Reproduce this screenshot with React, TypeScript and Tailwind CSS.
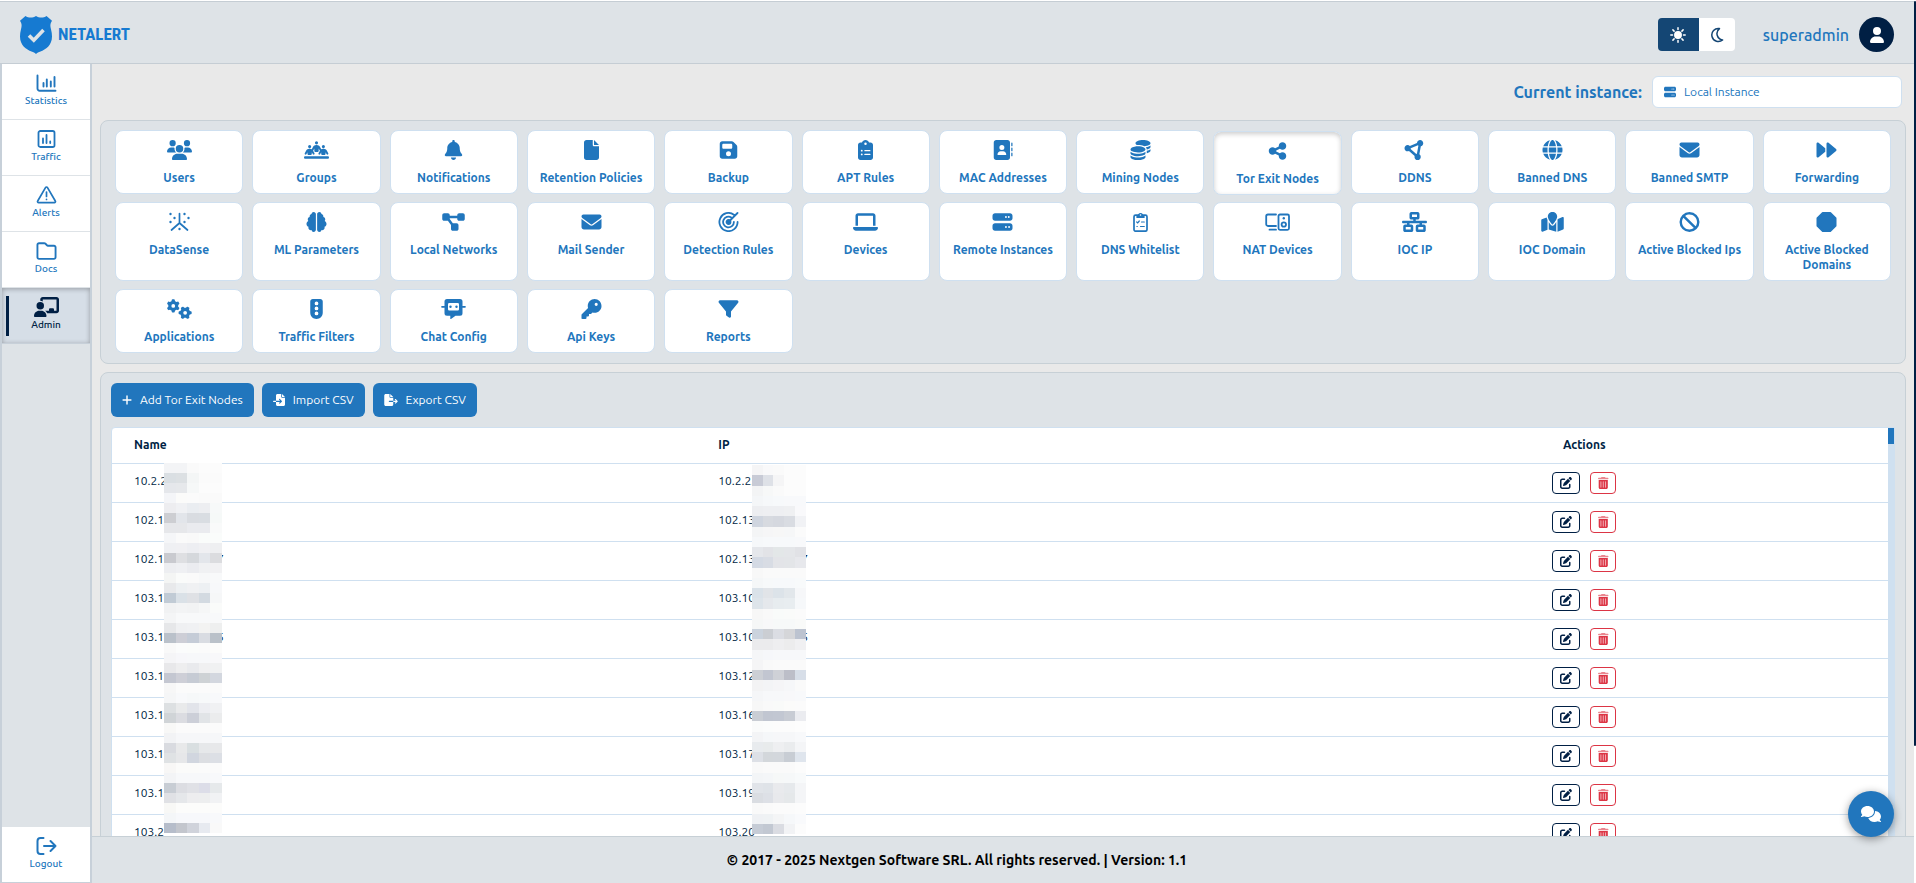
import { useState } from "react";
import type { ComponentType, ReactNode } from "react";
import {
  FaAddressBook,
  FaBan,
  FaBell,
  FaBrain,
  FaChalkboardUser,
  FaCircleNodes,
  FaClipboardList,
  FaCoins,
  FaComments,
  FaDiagramProject,
  FaEnvelope,
  FaFile,
  FaFileExport,
  FaFileImport,
  FaFilter,
  FaFloppyDisk,
  FaForward,
  FaGears,
  FaGlobe,
  FaKey,
  FaLaptop,
  FaMapLocation,
  FaNetworkWired,
  FaPenToSquare,
  FaPeopleLine,
  FaPlus,
  FaRegFolder,
  FaServer,
  FaShareNodes,
  FaTrafficLight,
  FaUser,
  FaUsers,
} from "react-icons/fa6";

type IconProps = { className?: string };
type Icon = ComponentType<IconProps>;

function StatsIcon({ className }: IconProps) {
  return (
    <svg viewBox="0 0 20 20" className={className} fill="none" stroke="currentColor" strokeWidth="1.9" strokeLinecap="round">
      <path d="M1 2.500v13A2.200 2.200 0 0 0 3.200 17.700H19M7 10v3.500M10.300 6.500v7M14.300 8.500v5M18 4v9.500" />
    </svg>
  );
}

function TrafficIcon({ className }: IconProps) {
  return (
    <svg viewBox="0 0 20 20" className={className} fill="none" stroke="currentColor" strokeWidth="1.8" strokeLinecap="round">
      <rect x="2" y="2" width="16" height="16" rx="1.8" />
      <path d="M6.500 9.500v4.500M10 6v8M13.700 12.500v1.500" />
    </svg>
  );
}

function AlertsIcon({ className }: IconProps) {
  return (
    <svg viewBox="0 0 20 20" className={className} fill="none" stroke="currentColor" strokeWidth="1.7" strokeLinecap="round" strokeLinejoin="round">
      <path d="M9 2.600 1.200 16a1.100 1.100 0 0 0 1 1.700h15.600a1.100 1.100 0 0 0 1-1.700L11 2.600a1.150 1.150 0 0 0-2 0Z" />
      <path d="M10 7v4.500M10 14.400v.1" />
    </svg>
  );
}

function LogoutIcon({ className }: IconProps) {
  return (
    <svg viewBox="0 0 20 20" className={className} fill="none" stroke="currentColor" strokeWidth="2" strokeLinecap="round" strokeLinejoin="round">
      <path d="M7 2H4a3 3 0 0 0-3 3v10a3 3 0 0 0 3 3h3M7.500 10H19M14 5l5 5-5 5" />
    </svg>
  );
}

function SunIcon({ className }: IconProps) {
  return (
    <svg viewBox="0 0 16 16" className={className} fill="currentColor" stroke="currentColor" strokeWidth="1.5" strokeLinecap="round">
      <circle cx="8" cy="8" r="3.2" />
      <path d="M8 .8v1.700M8 13.500v1.700M.8 8h1.700M13.500 8h1.700M2.900 2.900l1.200 1.200M11.900 11.900l1.200 1.200M2.900 13.100l1.200-1.200M11.900 4.100l1.200-1.200" />
    </svg>
  );
}

function MoonIcon({ className }: IconProps) {
  return (
    <svg viewBox="0 0 16 16" className={className} fill="none" stroke="currentColor" strokeWidth="1.5" strokeLinejoin="round">
      <path d="M10.500 1.600A6.500 6.500 0 1 0 13.600 12.900 6.300 6.300 0 0 1 10.500 1.600Z" />
    </svg>
  );
}

function DataSenseIcon({ className }: IconProps) {
  return (
    <svg viewBox="0 0 21 20" className={className} fill="currentColor">
      <path d="M10.500 1.500V11L2.500 18M10.500 11l8 7" fill="none" stroke="currentColor" strokeWidth="1.7" strokeLinecap="round" />
      <circle cx="1.5" cy="2" r="1.2" />
      <circle cx="5.5" cy="6" r="1.2" />
      <circle cx="1.5" cy="10" r="1.2" />
      <circle cx="15.5" cy="2" r="1.2" />
      <circle cx="19.5" cy="6" r="1.2" />
      <circle cx="15.5" cy="10" r="1.2" />
      <circle cx="10.5" cy="17" r="1.2" />
    </svg>
  );
}

function RadarIcon({ className }: IconProps) {
  return (
    <svg viewBox="0 0 20 20" className={className} fill="none" stroke="currentColor" strokeWidth="1.8" strokeLinecap="round">
      <path d="M15.400 2.700A9.100 9.100 0 1 0 19.100 10M12.800 5.400A5.400 5.400 0 1 0 15.400 10M19 1l-9 9" />
      <circle cx="10" cy="10" r="2" fill="currentColor" />
    </svg>
  );
}

function ClipboardCheckIcon({ className }: IconProps) {
  return (
    <svg viewBox="0 0 15 20" className={className} fill="none" stroke="currentColor" strokeWidth="1.7" strokeLinecap="round">
      <rect x="1" y="3.2" width="13" height="16" rx="1.6" />
      <path d="M4 5.500V3.500h1.500a2 2 0 0 1 4 0H11v2Z" fill="currentColor" strokeWidth="1.2" />
      <path d="M3.700 10l1 .9 1.600-1.900M8.500 10h2.800M3.900 14.500h.4M7.500 14.500h3.800" strokeWidth="1.2" />
      <circle cx="7.5" cy="3" r=".8" fill="#fff" stroke="none" />
    </svg>
  );
}

function NatDevicesIcon({ className }: IconProps) {
  return (
    <svg viewBox="0 0 25 20" className={className} fill="none" stroke="currentColor" strokeWidth="1.8" strokeLinecap="round">
      <path d="M11 2.500H3A1.800 1.800 0 0 0 1.200 4.300v7.900A1.800 1.800 0 0 0 3 14h8M4.500 17.700H11" />
      <rect x="13.5" y="2.5" width="10.5" height="15.3" rx="1.5" />
      <circle cx="18.8" cy="12.5" r="2.2" />
      <circle cx="18.8" cy="6.2" r="1.2" fill="currentColor" stroke="none" />
    </svg>
  );
}

function OctagonIcon({ className }: IconProps) {
  return (
    <svg viewBox="0 0 20 20" className={className} fill="currentColor" stroke="currentColor" strokeWidth="2" strokeLinejoin="round">
      <path d="M6.300 1h7.400L19 6.300v7.400L13.700 19H6.300L1 13.700V6.300Z" />
    </svg>
  );
}

function ChatBotIcon({ className }: IconProps) {
  return (
    <svg viewBox="0 0 25 20" className={className} fill="currentColor">
      <path
        fillRule="evenodd"
        d="M6 0h13a2.500 2.500 0 0 1 2.500 2.500v11.800a2.500 2.500 0 0 1-2.500 2.500h-4.500L10 20q-.7.400-.7-.4v-2.800H6a2.500 2.500 0 0 1-2.500-2.500V2.500A2.500 2.500 0 0 1 6 0Zm2.300 4A1.300 1.300 0 0 0 7 5.300v5a1.300 1.300 0 0 0 1.300 1.300h8.400a1.300 1.300 0 0 0 1.300-1.300v-5A1.300 1.300 0 0 0 16.700 4Z"
      />
      <circle cx="9.5" cy="7.8" r="1.2" />
      <circle cx="15.5" cy="7.8" r="1.2" />
      <path d="M1 7.800h2.500M21.500 7.800H24" stroke="currentColor" strokeWidth="1.7" strokeLinecap="round" />
    </svg>
  );
}

function TrashIcon({ className }: IconProps) {
  return (
    <svg viewBox="0 0 448 512" className={className} fill="currentColor">
      <path
        opacity=".6"
        d="M135 18c6-11 17-18 29-18h120c12 0 23 7 29 18l7 14h96c18 0 32 14 32 32s-14 32-32 32H32C14 96 0 82 0 64s14-32 32-32h96z"
      />
      <path d="M32 128h384v320c0 35-29 64-64 64H96c-35 0-64-29-64-64z" opacity=".35" />
      <path
        d="M32 128h384v320c0 35-29 64-64 64H96c-35 0-64-29-64-64zm92 56c-13 0-20 9-20 20v232a20 20 0 0 0 40 0V204c0-11-7-20-20-20zm100 0c-13 0-20 9-20 20v232a20 20 0 0 0 40 0V204c0-11-7-20-20-20zm100 0c-13 0-20 9-20 20v232a20 20 0 0 0 40 0V204c0-11-7-20-20-20z"
        fillRule="evenodd"
      />
    </svg>
  );
}

function Logo() {
  return (
    <a href="#" className="flex items-center gap-1.5 text-[#167ad1]">
      <svg viewBox="0 0 32 38" className="h-[38px] w-8">
        <path
          fill="currentColor"
          d="M5.500 0C8.500 2 12.500 2.200 16 0c3.500 2.200 7.500 2 10.500 0L32 4.800c-2.200 3-1.800 5.500-1 8.400.7 2.600 1 5 1 7.300 0 9-6.500 13-11.500 15-1.800.7-3.500 1.400-4.500 2.500-1-1.100-2.700-1.800-4.500-2.500C6.500 33.500 0 29.500 0 20.500c0-2.300.3-4.700 1-7.300.8-2.900 1.200-5.400-1-8.400Z"
        />
        <path d="M9 19.500l4.800 4.700L23.500 14" fill="none" stroke="#dee3e7" strokeWidth="3.6" />
      </svg>
      <span className="font-['Roboto_Condensed','Open_Sans_Condensed','Liberation_Sans',sans-serif] text-[17px] font-bold">NETALERT</span>
    </a>
  );
}

const navItems: { label: string; icon: Icon }[] = [
  { label: "Statistics", icon: StatsIcon },
  { label: "Traffic", icon: TrafficIcon },
  { label: "Alerts", icon: AlertsIcon },
  { label: "Docs", icon: FaRegFolder },
  { label: "Admin", icon: FaChalkboardUser },
];

const sections: { label: string; icon: Icon }[] = [
  { label: "Users", icon: FaUsers },
  { label: "Groups", icon: FaPeopleLine },
  { label: "Notifications", icon: FaBell },
  { label: "Retention Policies", icon: FaFile },
  { label: "Backup", icon: FaFloppyDisk },
  { label: "APT Rules", icon: FaClipboardList },
  { label: "MAC Addresses", icon: FaAddressBook },
  { label: "Mining Nodes", icon: FaCoins },
  { label: "Tor Exit Nodes", icon: FaShareNodes },
  { label: "DDNS", icon: FaCircleNodes },
  { label: "Banned DNS", icon: FaGlobe },
  { label: "Banned SMTP", icon: FaEnvelope },
  { label: "Forwarding", icon: FaForward },
  { label: "DataSense", icon: DataSenseIcon },
  { label: "ML Parameters", icon: FaBrain },
  { label: "Local Networks", icon: FaDiagramProject },
  { label: "Mail Sender", icon: FaEnvelope },
  { label: "Detection Rules", icon: RadarIcon },
  { label: "Devices", icon: FaLaptop },
  { label: "Remote Instances", icon: FaServer },
  { label: "DNS Whitelist", icon: ClipboardCheckIcon },
  { label: "NAT Devices", icon: NatDevicesIcon },
  { label: "IOC IP", icon: FaNetworkWired },
  { label: "IOC Domain", icon: FaMapLocation },
  { label: "Active Blocked Ips", icon: FaBan },
  { label: "Active Blocked Domains", icon: OctagonIcon },
  { label: "Applications", icon: FaGears },
  { label: "Traffic Filters", icon: FaTrafficLight },
  { label: "Chat Config", icon: ChatBotIcon },
  { label: "Api Keys", icon: FaKey },
  { label: "Reports", icon: FaFilter },
];

const nodes = [
  { name: "10.2.2", ip: "10.2.23" },
  { name: "102.1", ip: "102.13" },
  { name: "102.1", ip: "102.13", tail: "7" },
  { name: "103.1", ip: "103.10" },
  { name: "103.1", ip: "103.10", tail: "5" },
  { name: "103.1", ip: "103.12" },
  { name: "103.1", ip: "103.16" },
  { name: "103.1", ip: "103.17" },
  { name: "103.1", ip: "103.19" },
  { name: "103.2", ip: "103.20" },
];

// redaction masks, five colour cells per line
const nameMask = [
  "f3f4f6 f3f4f6 fafafa fcfcfc fcfcfc",
  "dadfe3 dce0e3 f4f6f6 fbfbfb fbfbfb",
  "e5e7eb e6e8eb f6f8f8 fcfcfc fcfcfc",
  "f4f5f8 fbfbfa fbfbfb fafafa fafafa",
  "ededf0 f0f1f4 eaedf1 edeef1 f7f9f9",
  "cdced2 e2e5ea d9dce1 d9dde2 f6f9f8",
  "e6e7ea e6e7ea eaebef eaebef f9fafa",
  "f5f6f8 fafafa f9f9f9 fafcfb fafcfb",
  "eff0f3 f0f0f3 edeef2 f0f0f3 eeeff1",
  "c9cacf dedfe2 d5d8dc e3e6eb dbdcdf",
  "edeef1 eff0f3 ebecf0 f0f1f3 f1f1f3",
  "f4f5f4 fafbfa fafafa f7f8f9 f8f9fa",
  "e8e9eb edf0f2 f0f1f3 edf0f3 f7f8fa",
  "c1cbd5 dae1e7 dfe1e5 d3dae1 f6f7f8",
  "f1f2f3 f3f4f5 f2f3f4 f6f7f7 fafbfa",
  "f4f5f6 f8f9fa f8f9fa f8f9fa f8f9fa",
  "e6e7e9 eff0f2 f0f1f3 f3f3f2 eeefef",
  "bac1ca cdced6 c5ccd7 d9dce2 bac1c9",
  "f9f9f9 fbfcfc fbfcfb fbfbfb fcfcfb",
  "f5f5f7 f7f7fa f7f8fa f7f8fa f8f8fa",
  "e8e8ea eeeeef e9eaed f0f0f1 f0f1f2",
  "c4c7d1 cecfd7 c6cbd4 ced2d5 d3d7df",
  "f7f7f7 fbfbfb fbfbfb fbfbfb fbfbfb",
  "f5f6f7 f8f9fb f6f8f9 f7f9fa f8f9fb",
  "dde0e2 e9eaeb e2e4ea edeef2 f0f1f3",
  "d0d4d7 dbdce1 cccfd8 e1e4e7 ebeced",
  "f8f8f7 fbfbfb fbfbfb fbfbfb fbfbfb",
  "f2f3f5 f6f7f9 f6f7f9 f6f7f9 f6f7f9",
  "d9dbe0 e8e9ea d9dfe1 e6e8ea e7e8ea",
  "dfe2e4 e6e7e9 d1d6df dcdee2 dcdfe5",
  "f8f7f6 fbfbfa fbfbfa fbfbfb fbfbfb",
  "f3f4f6 f7f8fa f7f8fa f7f8fa f8f9fb",
  "c8cdd4 dcdde2 e0e1e6 dcdde8 e6e9eb",
  "e0e1e5 e5e7ea ededef edeeef f1f2f4",
  "f8f8f6 fcfcfb fcfcfb fcfcfb fcfcfb",
  "f4f6f8 f7f8fb f7f8fb f7f8fb f8f9fb",
  "b6bdca c3c6cd d0d3db e7eaf0 f9f9f9",
];

const ipMask = [
  "f5f5f6 f9f9fa fafafa fcfcfc fcfcfc",
  "c8cbd6 dee1e7 f5f5f6 fcfcfc fcfcfc",
  "f3f4f5 f7f8f8 fafafa fcfcfc fcfcfc",
  "f4f6f8 f6f8fa f7f9fb f8f9fb f8f9fb",
  "edeef1 eeeff2 eeeff2 eff0f2 f9f9fb",
  "cfd5df d7dae0 d5d8df d9dce2 f1f2f5",
  "f4f5f6 f6f6f7 f7f7f7 f6f7f8 fbfbfb",
  "f6f8fa f7f9fb f7f9fb f7f9fb f8f9fb",
  "e5e7eb e2e3e7 e3e7e8 e4e6e9 e1e2e6",
  "d4dae4 d8dce4 e3e4e8 e3e5e8 e7e8ec",
  "f8f8f8 fafafa fafafa fafafa fafafa",
  "f5f7f8 f7f9fa f7f9fb f7f9fb f8fafb",
  "dae2e9 e1e4e8 dce3e9 e2e7eb f6f7f9",
  "dde4ea e5e8ec e7ecef e8edf0 f6f8fa",
  "f7f7f7 f9f9f9 f9fbfa fafbfa fbfbfb",
  "f6f7f7 f8f8f9 f7f9f9 f7f9f9 f9faf9",
  "cbd3dd cbced3 dbdde3 d5d6d9 bcc3d0",
  "ebebed ebebed eeeef0 ececed f0f0f2",
  "f5f6f8 f6f7fa f7f8fa f7f8fa f7f8fa",
  "f5f5f6 f9f9f9 fafafa fafafa fafafa",
  "cccfd5 c2c6d1 cfd1d7 bcbec8 d7dee8",
  "f3f3f4 f3f4f6 f5f5f7 f6f7f9 fafafa",
  "f5f6f8 f7f8fa f7f8fa f8f8fa f8f9fb",
  "f7f7f7 f9f9f9 f9faf9 fbfbfa fbfbfb",
  "c9cdd4 c1c6d1 c2c7d2 c8ccd4 ebecf0",
  "fafbfb fbfcfc fcfcfc fcfcfc fdfdfd",
  "f3f4f6 f5f7f9 f6f7f9 f6f7f9 f8f9fb",
  "e8ebee e8ebec eeeff1 eaecee f4f5f7",
  "dde0e6 d3d7db d3d7dc c8cdd4 dfe5ed",
  "f9f9f9 fafafa fafafa fafafa fcfcfc",
  "f3f5f7 f4f6f8 f6f8f8 f6f8f9 f8fafb",
  "e1e4e9 dfe3e8 e9eaed e6e9ec f4f5f7",
  "dadde2 dde0e6 e8e9ec e5e8ea f4f5f7",
  "f9f9f9 fafafa fbfbfb fbfbfb fcfcfc",
  "eff1f4 eff2f4 f4f5f6 f6f8fa f9fafc",
  "c6ccd6 c2c8d2 dadce2 f2f3f5 fcfcfc",
];

function Mask({ lines, className }: { lines: string[]; className: string }) {
  return (
    <div aria-hidden className={`absolute flex flex-col ${className}`}>
      {lines.map((line, i) => (
        <div key={i} className="flex flex-1">
          {line.split(" ").map((c, j) => (
            <span key={j} className="flex-1" style={{ backgroundColor: `#${c}` }} />
          ))}
        </div>
      ))}
    </div>
  );
}

function ToolbarButton({ children }: { children: ReactNode }) {
  return (
    <button type="button" className="flex h-[34px] items-center gap-2 rounded-md bg-[#2176bd] px-[11px] text-[12px] text-white">
      {children}
    </button>
  );
}

export default function App() {
  const [page, setPage] = useState("Admin");
  const [section, setSection] = useState("Tor Exit Nodes");

  return (
    <div className="flex h-screen overflow-hidden border-t border-white bg-[#e9e9e9] font-['Ubuntu','Open_Sans','Noto_Sans',sans-serif] text-[#2176bd]">
      <div className="flex min-w-0 flex-1 flex-col">
        <header className="flex h-[63px] shrink-0 items-center justify-between border-y border-[#c5cdd4] bg-[#dee3e7] pt-1 pr-5 pl-5">
          <Logo />
          <div className="flex items-center">
            <div className="flex h-[33px] overflow-hidden rounded-sm">
              <button type="button" aria-label="Light theme" className="flex w-[41px] items-center justify-center bg-[#144674] text-white">
                <SunIcon className="size-4" />
              </button>
              <button type="button" aria-label="Dark theme" className="flex w-9 items-center justify-center bg-white text-[#144674]">
                <MoonIcon className="size-4" />
              </button>
            </div>
            <span className="ml-7 text-base font-medium">superadmin</span>
            <button type="button" aria-label="Account" className="ml-2.5 flex size-[35px] items-center justify-center rounded-full bg-[#001f44] text-white">
              <FaUser className="size-4" />
            </button>
          </div>
        </header>

        <div className="flex min-h-0 flex-1">
          <nav className="flex w-[92px] shrink-0 flex-col border-x-2 border-b border-[#c7d0d9] bg-[#dee3e7]">
            {navItems.map(({ label, icon: Icon }) => (
              <button
                key={label}
                type="button"
                onClick={() => setPage(label)}
                className={`relative flex h-14 flex-col items-center border-b pt-[9px] text-[10px] leading-3 font-medium ${
                  page === label
                    ? "border-[#c7d0d9] bg-[#d6dee7] text-[#001f44] shadow-[inset_0_1px_5px_rgba(0,0,0,0.3)]"
                    : "border-[#dee3e7] bg-white"
                }`}
              >
                {page === label && <span className="absolute top-2 left-1 h-10 w-[3px] bg-[#001f44]" />}
                <Icon className="h-5 w-[25px]" />
                <span className="mt-0.5">{label}</span>
              </button>
            ))}
            <button type="button" className="mt-auto flex h-[55px] flex-col items-center bg-white pt-[9px] text-[10px] leading-3 font-medium">
              <LogoutIcon className="h-5 w-[25px]" />
              <span className="mt-0.5">Logout</span>
            </button>
          </nav>

          <div className="flex min-w-0 flex-1 flex-col">
            <main className="min-h-0 flex-1 overflow-hidden px-2">
              <div className="flex h-14 items-center justify-end gap-2.5 pr-1">
                <label htmlFor="instance" className="text-base font-semibold">
                  Current instance:
                </label>
                <div className="relative">
                  <FaServer className="absolute top-2.5 left-3 size-3" />
                  <select id="instance" className="h-8 w-[250px] appearance-none rounded-md border border-[#cfe0f0] bg-white pl-[31px] text-[12px]">
                    <option>Local Instance</option>
                  </select>
                </div>
              </div>

              <section className="grid grid-cols-13 gap-x-[9px] gap-y-2 rounded-lg border border-[#c7d0d6] bg-[#dee3e7] px-3.5 pt-[9px] pb-2.5">
                {sections.map(({ label, icon: Icon }) => (
                  <button
                    key={label}
                    type="button"
                    onClick={() => setSection(label)}
                    className={`flex flex-col items-center gap-2.5 rounded-lg border border-[#cfe0f0] bg-white px-2 pt-[9px] pb-2 text-[12px] leading-[15px] font-semibold ${
                      section === label ? "translate-y-px shadow-[inset_0_2px_5px_rgba(0,0,0,0.2)]" : ""
                    }`}
                  >
                    <Icon className="h-5 w-[25px]" />
                    <span>{label}</span>
                  </button>
                ))}
              </section>

              <section className="mt-2 h-screen rounded-lg border border-[#c7d0d6] bg-[#dee3e7] px-2.5 pt-2.5">
                <div className="flex gap-2">
                  <ToolbarButton>
                    <FaPlus className="h-3.5 w-2.5" />
                    Add Tor Exit Nodes
                  </ToolbarButton>
                  <ToolbarButton>
                    <FaFileImport className="size-3" />
                    Import CSV
                  </ToolbarButton>
                  <ToolbarButton>
                    <FaFileExport className="h-3 w-3.5" />
                    Export CSV
                  </ToolbarButton>
                </div>

                <div className="relative mt-2.5 flex rounded-tl-sm border border-[#cfe0f0] bg-white text-[#001f44]">
                  <table className="flex-1 table-fixed border-collapse text-[12px]">
                    <thead>
                      <tr className="h-[35px] border-b border-[#cfe0f0] text-left">
                        <th className="w-[32.9%] pl-[22px] font-bold">Name</th>
                        <th className="w-[32.9%] pl-[22px] font-bold">IP</th>
                        <th className="text-center font-bold">Actions</th>
                      </tr>
                    </thead>
                    <tbody>
                      {nodes.map((node, i) => (
                        <tr key={i} className="h-[39px] border-b border-[#cfe0f0]">
                          <td className="pb-1 pl-[22px]">
                            <span className="inline-block w-[83px]">{node.name}</span>
                            {node.tail}
                          </td>
                          <td className="pb-1 pl-[22px]">
                            <span className="inline-block w-[83px]">{node.ip}</span>
                            {node.tail}
                          </td>
                          <td>
                            <div className="flex justify-center gap-2.5">
                              <button type="button" aria-label="Edit" className="flex h-[22px] w-7 items-center justify-center rounded-sm border border-[#001f44]">
                                <FaPenToSquare className="size-3" />
                              </button>
                              <button type="button" aria-label="Delete" className="flex h-[22px] w-[26px] items-center justify-center rounded-sm border border-[#dc3545] text-[#dc3545]">
                                <TrashIcon className="h-3 w-auto" />
                              </button>
                            </div>
                          </td>
                        </tr>
                      ))}
                    </tbody>
                  </table>
                  <div className="w-1.5 bg-[#cfe0f0]">
                    <div className="h-4 bg-[#2176bd]" />
                  </div>
                  <Mask lines={nameMask} className="top-[35px] left-[52px] h-[370px] w-[58px]" />
                  <Mask lines={ipMask} className="top-[37px] left-[35.9%] h-[369px] w-[54px]" />
                </div>
              </section>
            </main>

            <footer className="flex h-[47px] shrink-0 items-center justify-center border-t border-[#c7d0d6] bg-[#dee3e7] pr-[92px] text-sm font-semibold text-black">
              © 2017 - 2025 Nextgen Software SRL. All rights reserved. | Version: 1.1
            </footer>
          </div>
        </div>
      </div>

      {/* page scroll indicator */}
      <div className="w-0.5 bg-white">
        <div className="h-[745px] rounded-sm bg-[#001f44]" />
      </div>

      <button
        type="button"
        aria-label="Chat"
        className="fixed right-[22px] bottom-[46px] flex size-[46px] items-center justify-center rounded-full bg-[#2176bd] text-white shadow-[0_2px_8px_rgba(0,0,0,0.4)]"
      >
        <FaComments className="h-4 w-5" />
      </button>
    </div>
  );
}
